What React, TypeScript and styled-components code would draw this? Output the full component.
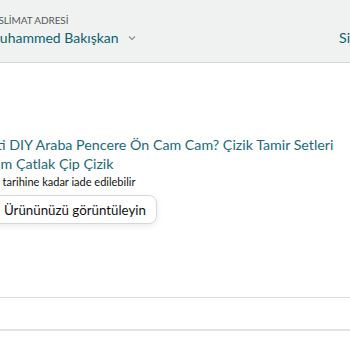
import { styled, createGlobalStyle } from 'styled-components';

const GlobalStyle = createGlobalStyle`
  html, body {
    margin: 0;
    padding: 0;
    background: #ffffff;
    overflow: hidden;
  }
  body {
    font-family: Lato, "Noto Sans", Arial, sans-serif;
    color: #0f1111;
  }
`;

const Page = styled.div`
  width: 380px;
  margin-left: -13px;
`;

const Header = styled.header`
  display: flex;
  justify-content: space-between;
  align-items: flex-end;
  height: 63px;
  padding: 0 0 14px 0;
  box-sizing: border-box;
  background: #f0f2f2;
  border-bottom: 1px solid #d5d9d9;
`;

const AddressBlock = styled.div`
  display: flex;
  flex-direction: column;
  gap: 1px;
`;

const AddressLabel = styled.span`
  font-size: 10px;
  line-height: 14px;
  letter-spacing: -0.1px;
  color: #565959;
`;

const AddressName = styled.button`
  display: flex;
  align-items: center;
  gap: 9px;
  padding: 0;
  border: none;
  background: none;
  font-family: inherit;
  font-size: 14px;
  line-height: 20px;
  color: #0f5f6f;
`;

const HeaderLink = styled.a`
  width: 28px;
  font-size: 14.2px;
  line-height: 20px;
  color: #0f5f6f;
  text-decoration: none;
  white-space: nowrap;
`;

const OrderSection = styled.section`
  display: flex;
  flex-direction: column;
  align-items: flex-start;
  padding-top: 72px;
  height: 235px;
  box-sizing: border-box;
  border-bottom: 1px solid #dcdcdc;
`;

const ProductTitle = styled.a`
  margin-left: -3px;
  width: 365px;
  font-size: 14.25px;
  line-height: 19px;
  color: #1b6a78;
  text-decoration: none;
`;

const ReturnNote = styled.span`
  margin-top: 1px;
  font-size: 11px;
  line-height: 16px;
  color: #0f1111;
`;

const ViewButton = styled.button`
  margin-top: 5px;
  height: 29px;
  padding: 0 10px 0 16px;
  border: 1px solid #d5d9d9;
  border-radius: 8px;
  background: #ffffff;
  box-shadow: 0 2px 5px rgba(213, 217, 217, 0.5);
  font-family: inherit;
  font-size: 13.3px;
  color: #0f1111;
`;

const Spacer = styled.div`
  height: 31px;
  border-bottom: 2px solid #e3e3e3;
`;

const Chevron = () => (
  <svg width="8" height="6" viewBox="0 0 8 6" fill="none">
    <path d="M1 1.5 L4 4.5 L7 1.5" stroke="#8a8f8f" strokeWidth="1.2" />
  </svg>
);

export default function App() {
  return (
    <Page>
      <GlobalStyle />
      <Header>
        <AddressBlock>
          <AddressLabel>TESLİMAT ADRESİ</AddressLabel>
          <AddressName>
            Muhammed Bakışkan
            <Chevron />
          </AddressName>
        </AddressBlock>
        <HeaderLink>Siparişler</HeaderLink>
      </Header>
      <OrderSection>
        <ProductTitle>
          Kiti DIY Araba Pencere Ön Cam Cam? Çizik Tamir Setleri Cam Çatlak Çip Çizik
        </ProductTitle>
        <ReturnNote>12 tarihine kadar iade edilebilir</ReturnNote>
        <ViewButton>Ürününüzü görüntüleyin</ViewButton>
      </OrderSection>
      <Spacer />
    </Page>
  );
}
